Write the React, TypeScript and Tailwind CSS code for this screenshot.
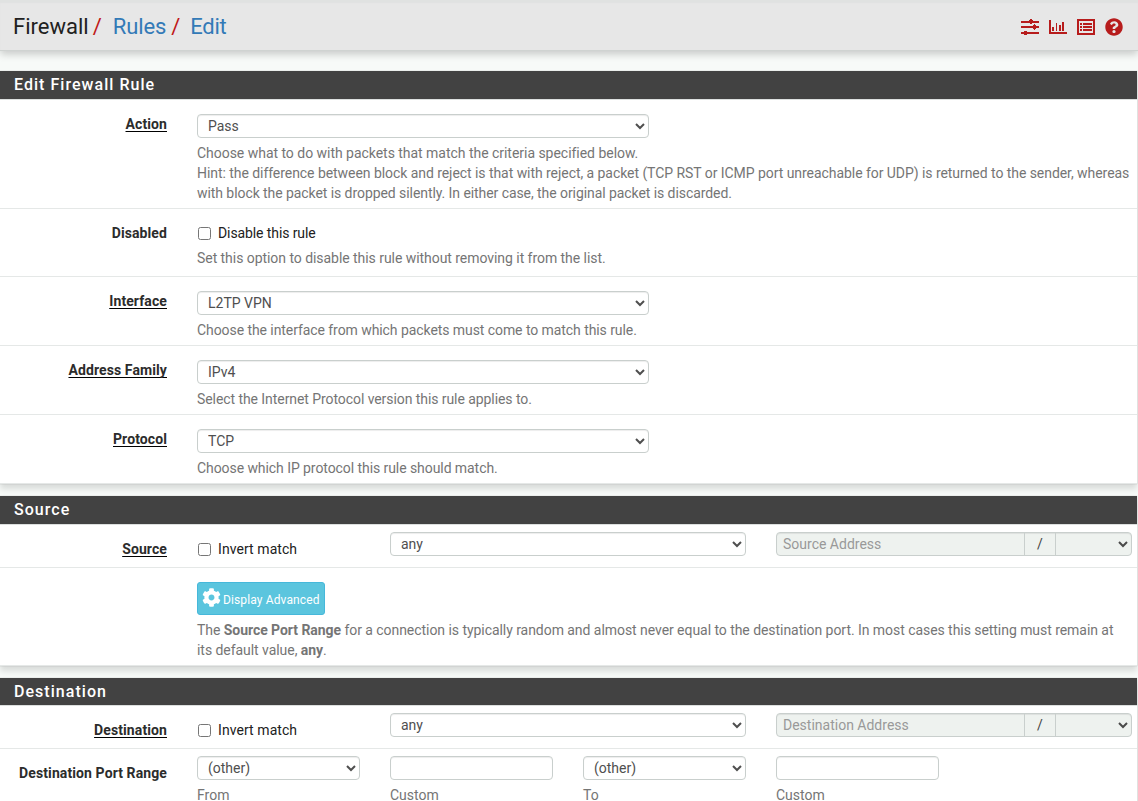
import type { ReactNode } from 'react';

const selectClass =
  'block h-6 rounded border border-[#c9cfcd] bg-white pl-1.5 pr-[7px] text-[14px] text-[#4f4f4f] shadow-[inset_0_1px_1px_rgba(0,0,0,0.075)]';
const helpClass = 'mt-[5px] block whitespace-nowrap text-[#757575]';

function Select({ value, width }: { value: string; width: string }) {
  return (
    <select className={`${selectClass} ${width}`} defaultValue={value}>
      <option>{value}</option>
    </select>
  );
}

function Checkbox({ text, tracking = '' }: { text: string; tracking?: string }) {
  return (
    <label className={`flex h-5 items-center whitespace-nowrap text-[#212121] ${tracking}`}>
      <input type="checkbox" className="ml-px mr-[7px] size-[13px]" />
      {text}
    </label>
  );
}

function Label({ text, required = false, pad = '' }: { text: string; required?: boolean; pad?: string }) {
  return (
    <div className={`w-[167px] shrink-0 text-right font-bold tracking-[0.1px] text-[#2c2c2c] ${pad}`}>
      <span
        className={
          required
            ? 'underline decoration-black decoration-1 underline-offset-2 [text-decoration-skip-ink:none]'
            : ''
        }
      >
        {text}
      </span>
    </div>
  );
}

function Row({ className, children }: { className: string; children: ReactNode }) {
  return <div className={`flex gap-[30px] border-b border-[#e5e8e7] ${className}`}>{children}</div>;
}

function SelectRow({ label, value, help }: { label: string; value: string; help: ReactNode }) {
  return (
    <Row className="pb-[5px] pt-[14px]">
      <Label text={label} required />
      <div className="min-w-0 flex-1">
        <Select value={value} width="w-[452px]" />
        <span className={`${helpClass} tracking-[-0.07px]`}>{help}</span>
      </div>
    </Row>
  );
}

function Panel({
  title,
  leading = 'leading-[28px]',
  className,
  children,
}: {
  title: string;
  leading?: string;
  className: string;
  children: ReactNode;
}) {
  return (
    <section className={`mr-px bg-white shadow-[0_5px_6px_rgba(0,0,0,0.12),0_0_1px_rgba(0,0,0,0.25)] ${className}`}>
      <h2
        className={`border-b border-[#dcdfde] bg-[#424242] pl-[14px] text-[16px] font-medium tracking-[1.04px] text-white ${leading}`}
      >
        {title}
      </h2>
      {children}
    </section>
  );
}

function AddressRow({ label, placeholder }: { label: string; placeholder: string }) {
  return (
    <Row className="h-[43px] pt-[7px]">
      <Label text={label} required pad="pt-[7px]" />
      <div className="w-[163px] pt-[7px]">
        <Checkbox text="Invert match" tracking="tracking-[0.07px]" />
      </div>
      <Select value="any" width="w-[356px]" />
      <div className="flex h-6 w-[356px] overflow-hidden rounded border border-[#c9cfcd] bg-[#eef2ef] shadow-[inset_0_1px_1px_rgba(0,0,0,0.075)]">
        <input
          disabled
          placeholder={placeholder}
          className="w-[247px] px-1.5 text-[14px] placeholder:text-[#999]"
        />
        <span className="w-[32px] border-x border-[#c9cfcd] text-center leading-[22px] text-[#444]">/</span>
        <select className="flex-1 pl-1.5 pr-[7px] text-[14px] text-[#4a4a4a]" />
      </div>
    </Row>
  );
}

function PortField({ caption, select = false }: { caption: string; select?: boolean }) {
  return (
    <div className="w-[163px]">
      {select ? (
        <Select value="(other)" width="w-[163px]" />
      ) : (
        <input className={`${selectClass} w-[163px]`} />
      )}
      <span className={helpClass}>{caption}</span>
    </div>
  );
}

function HeaderIcons() {
  return (
    <div className="flex items-center gap-[10px] text-[#b71c1c]">
      <svg width="18" height="18" viewBox="0 0 18 18" fill="currentColor" shapeRendering="crispEdges">
        <path d="M0 3h18v2H0zM9 1h2v5H9zM8 2h4v3H8zM0 8h18v2H0zM12 7h3v4h-3zM13 6h1v6h-1zM0 14h18v2H0zM3 13h3v4H3z" />
      </svg>
      <svg width="18" height="18" viewBox="0 0 18 18" fill="currentColor" shapeRendering="crispEdges">
        <path d="M0 2h2v12h16v2H0zM3 9h2v4H3zM7 5h1v8H7zM10 7h2v6h-2zM13 4h2v9h-2z" />
      </svg>
      <svg width="18" height="18" viewBox="0 0 18 18" fill="currentColor" shapeRendering="crispEdges">
        <path
          fillRule="evenodd"
          d="M0 1h18v16H0zM2 3v12h14V3zM3 5h2v2H3zM6 5h9v2H6zM3 8h2v2H3zM6 8h9v2H6zM3 11h2v2H3zM6 11h9v2H6z"
        />
      </svg>
      <svg width="18" height="18" viewBox="0 0 512 512" fill="currentColor">
        <path d="M504 256c0 136.997-111.043 248-248 248S8 392.997 8 256C8 119.083 119.043 8 256 8s248 111.083 248 248zM262.655 90c-54.497 0-89.255 22.957-116.549 63.758-3.536 5.286-2.353 12.415 2.715 16.258l34.699 26.31c5.205 3.947 12.621 3.008 16.665-2.122 17.864-22.658 30.113-35.797 57.303-35.797 20.429 0 45.698 13.148 45.698 32.958 0 14.976-12.363 22.667-32.534 33.976C247.128 238.528 216 254.941 216 296v4c0 6.627 5.373 12 12 12h56c6.627 0 12-5.373 12-12v-1.333c0-28.462 83.186-29.647 83.186-106.667 0-58.002-60.165-102-116.531-102zM256 338c-25.365 0-46 20.635-46 46 0 25.364 20.635 46 46 46s46-20.636 46-46c0-25.365-20.635-46-46-46z" />
      </svg>
    </div>
  );
}

function Cog() {
  return (
    <svg width="19" height="19" viewBox="0 0 512 512" fill="currentColor" className="mb-[3px] shrink-0">
      <path d="M487.4 315.700l-42.600-24.600c4.300-23.200 4.300-47 0-70.200l42.600-24.600c4.900-2.800 7.100-8.600 5.500-14-11.100-35.600-30-67.800-54.700-94.600-3.800-4.100-10-5.100-14.800-2.300L380.800 110c-17.900-15.400-38.500-27.300-60.800-35.100V25.800c0-5.600-3.900-10.500-9.400-11.700-36.700-8.200-74.300-7.800-109.200 0-5.500 1.200-9.400 6.100-9.400 11.700V75c-22.200 7.900-42.800 19.800-60.800 35.100L88.700 85.500c-4.900-2.800-11-1.900-14.800 2.300-24.700 26.700-43.600 58.900-54.700 94.600-1.700 5.400.6 11.200 5.500 14L67.300 221c-4.300 23.200-4.300 47 0 70.200l-42.600 24.600c-4.900 2.800-7.100 8.600-5.500 14 11.100 35.600 30 67.800 54.700 94.600 3.800 4.100 10 5.100 14.800 2.300l42.600-24.600c17.900 15.400 38.500 27.300 60.800 35.100v49.200c0 5.600 3.900 10.500 9.400 11.700 36.700 8.200 74.300 7.800 109.200 0 5.500-1.200 9.400-6.100 9.400-11.700v-49.200c22.200-7.900 42.800-19.800 60.800-35.100l42.600 24.600c4.900 2.800 11 1.900 14.800-2.300 24.700-26.700 43.600-58.900 54.700-94.600 1.500-5.500-.7-11.300-5.600-14.100zM256 336c-44.100 0-80-35.900-80-80s35.900-80 80-80 80 35.900 80 80-35.900 80-80 80z" />
    </svg>
  );
}

export default function App() {
  return (
    <div className="h-[801px] overflow-hidden bg-[#f7faf8] font-['Roboto',sans-serif] text-[14px] leading-5">
      <header className="flex h-[51px] items-center justify-between border-b border-[#cfd3d1] bg-[#e7e7e7] pl-[13px] pr-[15px] pt-[3px] shadow-[0_3px_8px_rgba(0,0,0,0.2),inset_0_3px_1px_rgba(220,224,222,0.6)]">
        <nav className="flex text-[22px] leading-6 text-[#212121]">
          <span>Firewall</span>
          <span className="ml-1 text-[#c01818]">/</span>
          <span className="ml-[11px] tracking-[-0.1px] text-[#337ab7]">Rules</span>
          <span className="ml-[5px] text-[#c01818]">/</span>
          <span className="ml-[10px] tracking-[-0.3px] text-[#337ab7]">Edit</span>
        </nav>
        <HeaderIcons />
      </header>

      <Panel title="Edit Firewall Rule" className="mt-5">
        <SelectRow
          label="Action"
          value="Pass"
          help={
            <>
              <span className="tracking-[-0.03px]">
                Choose what to do with packets that match the criteria specified below.
              </span>
              <br />
              <span className="tracking-[-0.055px]">
                Hint: the difference between block and reject is that with reject, a packet (TCP RST or ICMP port
                unreachable for UDP) is returned to the sender, whereas
              </span>
              <br />
              with block the packet is dropped silently. In either case, the original packet is discarded.
            </>
          }
        />
        <Row className="h-[68px] pt-[14px]">
          <Label text="Disabled" />
          <div>
            <Checkbox text="Disable this rule" tracking="tracking-[-0.1px]" />
            <span className={`${helpClass} tracking-[-0.05px]`}>
              Set this option to disable this rule without removing it from the list.
            </span>
          </div>
        </Row>
        <SelectRow
          label="Interface"
          value="L2TP VPN"
          help="Choose the interface from which packets must come to match this rule."
        />
        <SelectRow
          label="Address Family"
          value="IPv4"
          help="Select the Internet Protocol version this rule applies to."
        />
        <SelectRow label="Protocol" value="TCP" help="Choose which IP protocol this rule should match." />
      </Panel>

      <Panel title="Source" className="mt-3">
        <AddressRow label="Source" placeholder="Source Address" />
        <Row className="h-[98px] pt-[14px]">
          <Label text="" />
          <div className="min-w-0 flex-1">
            <button className="flex h-[33px] w-[128px] items-center gap-[2px] rounded-[3px] border border-[#46b8da] bg-[#5bc5de] pl-1 text-[12px] text-white">
              <Cog />
              <span className="whitespace-nowrap pt-[2px] tracking-[0.12px]">Display Advanced</span>
            </button>
            <span className={`${helpClass} tracking-[-0.05px]`}>
              The <b>Source Port Range</b> for a connection is typically random and almost never equal to the
              destination port. In most cases this setting must remain at
              <br />
              its default value, <b>any</b>.
            </span>
          </div>
        </Row>
      </Panel>

      <Panel title="Destination" leading="leading-[27px]" className="mt-3">
        <AddressRow label="Destination" placeholder="Destination Address" />
        <Row className="h-[72px] pt-[7px]">
          <Label text="Destination Port Range" pad="pt-[7px]" />
          <PortField caption="From" select />
          <PortField caption="Custom" />
          <PortField caption="To" select />
          <PortField caption="Custom" />
        </Row>
      </Panel>
    </div>
  );
}
